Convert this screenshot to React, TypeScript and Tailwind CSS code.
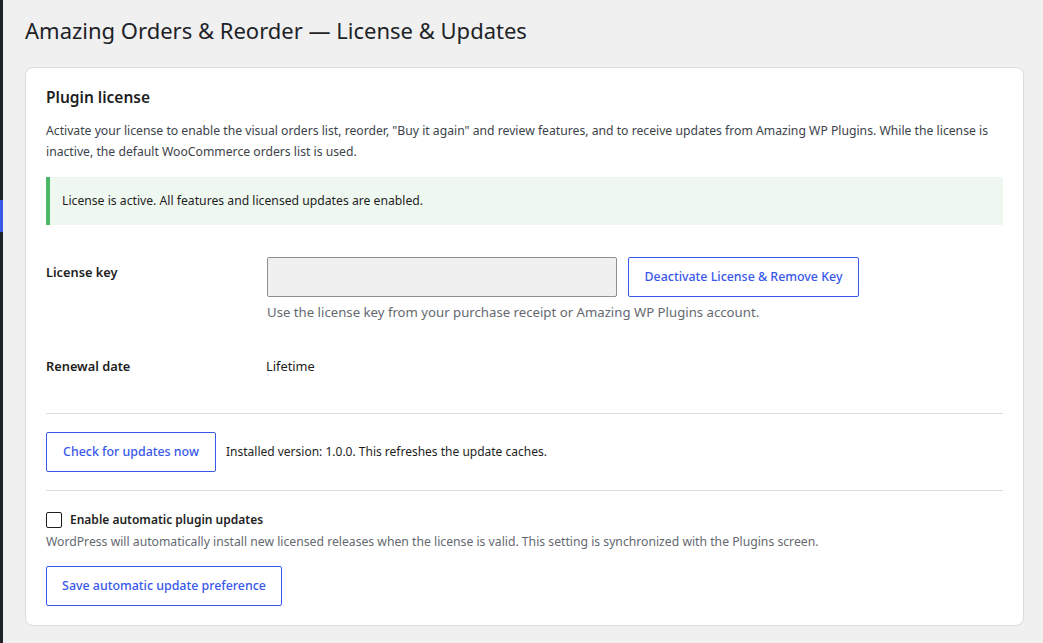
const FONT = { fontFamily: '"Noto Sans", "Open Sans", Arial, sans-serif' };

const btnClass =
  "inline-flex h-[40px] items-center justify-center whitespace-nowrap rounded-[2px] border border-[#3858e9] bg-white text-[12.4px] font-medium text-[#3858e9]";

export default function App() {
  return (
    <div className="relative flex min-h-[643px] bg-[#f0f0f1] text-[#1e1e1e]" style={FONT}>
      {/* admin sidebar edge */}
      <div className="w-[3px] shrink-0 bg-[#1d2327]" />
      <div className="absolute left-0 top-[200px] h-[32px] w-[3px] bg-[#3858e9]" />

      <main className="flex-1 pl-[22px] pr-[19px] pt-[16px]">
        <h1 className="text-[22px] leading-[29px] font-normal text-[#1d2327]">
          Amazing Orders &amp; Reorder — License &amp; Updates
        </h1>

        <section className="mt-[22px] rounded-lg border border-[#dcdcde] bg-white px-5 pt-[19px] pb-[19px]">
          <h2 className="text-[15.5px] leading-[20px] font-semibold text-[#1e1e1e]">Plugin license</h2>
          <p className="mt-[13px] text-[12.2px] leading-[21px] text-[#3c434a]">
            Activate your license to enable the visual orders list, reorder, "Buy it again" and review features, and to
            receive updates from Amazing WP Plugins. While the license is inactive, the default WooCommerce orders list
            is used.
          </p>

          <div className="mt-[15px] border-l-4 border-[#4ab866] bg-[#eef7f0] px-3 py-[14px] text-[12.2px] leading-[20px] text-[#1e1e1e]">
            License is active. All features and licensed updates are enabled.
          </div>

          {/* form rows */}
          <div className="mt-[32px] flex">
            <div className="w-[221px] shrink-0 pt-[5px] text-[12.8px] leading-[20px] font-semibold">License key</div>
            <div>
              <div className="flex items-center gap-[11px]">
                <input
                  type="text"
                  disabled
                  className="h-[40px] w-[350px] rounded-[2px] border border-[#8c8f94] bg-[#f0f0f1]"
                />
                <button type="button" className={`${btnClass} w-[231px]`}>
                  Deactivate License &amp; Remove Key
                </button>
              </div>
              <p className="mt-[5px] text-[13.2px] leading-[20px] text-[#646970]">
                Use the license key from your purchase receipt or Amazing WP Plugins account.
              </p>
            </div>
          </div>

          <div className="mt-[34px] flex leading-[20px]">
            <div className="w-[220px] shrink-0 text-[12.8px] font-semibold">Renewal date</div>
            <div className="text-[12.8px] text-[#1e1e1e]">Lifetime</div>
          </div>

          <hr className="mt-[37px] border-[#dcdcde]" />

          <div className="mt-[18px] flex items-center gap-[10px]">
            <button type="button" className={`${btnClass} w-[170px]`}>
              Check for updates now
            </button>
            <span className="text-[12px] leading-[20px] text-[#1e1e1e]">
              Installed version: 1.0.0. This refreshes the update caches.
            </span>
          </div>

          <hr className="mt-[18px] border-[#dcdcde]" />

          <label className="mt-[19px] flex h-[20px] items-center gap-2 text-[12px] font-semibold">
            <span className="h-4 w-4 rounded-[2px] border border-[#1e1e1e] bg-white" />
            Enable automatic plugin updates
          </label>
          <p className="mt-[2px] text-[12.2px] leading-[20px] text-[#646970]">
            WordPress will automatically install new licensed releases when the license is valid. This setting is
            synchronized with the Plugins screen.
          </p>

          <button type="button" className={`${btnClass} mt-[14px] w-[236px]`}>
            Save automatic update preference
          </button>
        </section>
      </main>
    </div>
  );
}
